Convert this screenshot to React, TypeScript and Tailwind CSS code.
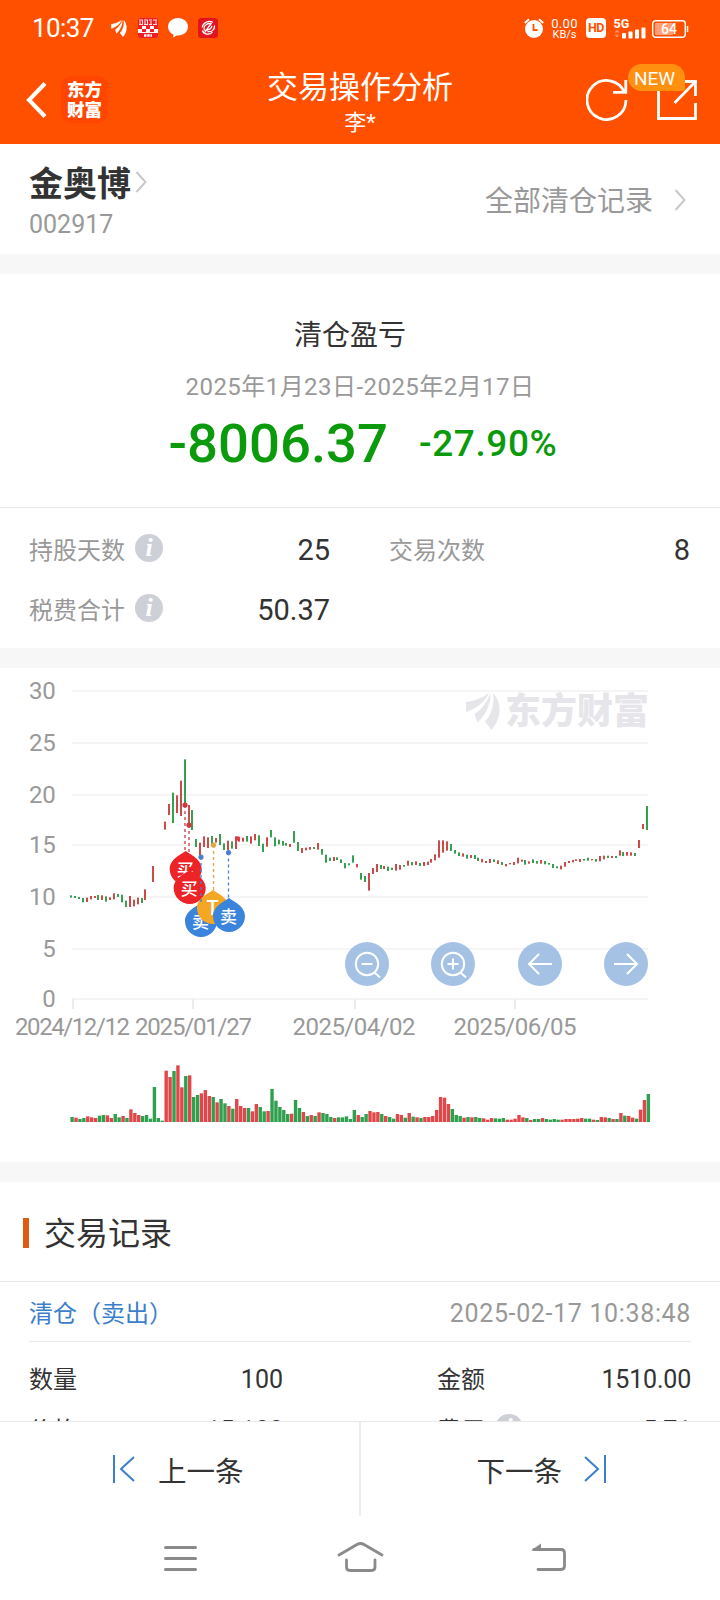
import React from 'react';

type Tone = 'r' | 'g';
type Candle = [index: number, tone: Tone, high: number, low: number];

const CANDLE_COLORS = { r: '#cb4a4a', g: '#36a052' };
const VOLUME_COLORS = { r: '#e0474a', g: '#2fa14e' };

// index, tone, top and bottom in thirds of a pixel below the chart origin
const CANDLES: Candle[] = [
  [0, 'g', 676, 683], [1, 'g', 678, 684], [2, 'g', 681, 687], [3, 'g', 684, 697], [4, 'r', 683, 696],
  [5, 'r', 678, 688], [6, 'r', 678, 684], [7, 'g', 675, 690], [8, 'r', 676, 690], [9, 'g', 679, 695],
  [10, 'r', 682, 690], [11, 'r', 670, 688], [12, 'g', 672, 681], [13, 'g', 674, 697], [14, 'g', 692, 711],
  [15, 'r', 678, 711], [16, 'r', 689, 709], [17, 'r', 683, 703], [18, 'g', 684, 699], [19, 'r', 658, 690],
  [21, 'r', 588, 636], [24, 'r', 455, 479], [25, 'r', 402, 435], [26, 'g', 368, 459], [27, 'r', 376, 429],
  [28, 'r', 332, 438], [29, 'g', 268, 405], [30, 'r', 405, 465], [31, 'g', 420, 480], [32, 'g', 507, 531],
  [33, 'r', 518, 555], [34, 'r', 499, 531], [35, 'r', 502, 534], [36, 'g', 498, 522], [37, 'r', 504, 518],
  [38, 'g', 492, 525], [39, 'g', 520, 540], [40, 'r', 512, 540], [41, 'g', 514, 536], [42, 'r', 499, 537],
  [43, 'r', 503, 515], [44, 'r', 503, 515], [45, 'g', 498, 515], [46, 'r', 499, 521], [47, 'r', 492, 511],
  [48, 'g', 496, 528], [49, 'g', 521, 546], [50, 'r', 502, 530], [51, 'g', 480, 502], [52, 'g', 502, 529],
  [53, 'g', 509, 523], [54, 'g', 513, 527], [55, 'g', 519, 527], [56, 'r', 522, 531], [57, 'g', 483, 518],
  [58, 'g', 516, 543], [59, 'r', 534, 549], [60, 'r', 533, 541], [61, 'r', 531, 539], [62, 'g', 531, 537],
  [63, 'r', 519, 539], [64, 'g', 537, 554], [65, 'g', 554, 578], [66, 'g', 563, 573], [67, 'r', 561, 573],
  [68, 'g', 562, 570], [69, 'g', 568, 579], [70, 'g', 579, 595], [71, 'g', 580, 586], [72, 'g', 556, 578],
  [73, 'r', 582, 592], [74, 'g', 609, 629], [75, 'g', 618, 636], [76, 'r', 609, 662], [77, 'r', 594, 612],
  [78, 'r', 582, 606], [79, 'g', 585, 597], [80, 'r', 588, 597], [81, 'g', 590, 603], [82, 'g', 593, 600],
  [83, 'r', 582, 602], [84, 'r', 585, 599], [85, 'g', 585, 590], [86, 'r', 572, 587], [87, 'g', 576, 586],
  [88, 'r', 574, 585], [89, 'g', 579, 588], [90, 'r', 576, 588], [91, 'r', 575, 585], [92, 'r', 567, 578],
  [93, 'r', 553, 571], [94, 'r', 511, 563], [95, 'r', 511, 548], [96, 'r', 514, 542], [97, 'g', 522, 543],
  [98, 'g', 540, 551], [99, 'g', 547, 558], [100, 'r', 550, 560], [101, 'g', 554, 566], [102, 'r', 555, 564],
  [103, 'g', 555, 567], [104, 'g', 563, 573], [105, 'r', 567, 577], [106, 'r', 573, 579], [107, 'r', 567, 579],
  [108, 'g', 568, 576], [109, 'r', 571, 582], [110, 'g', 576, 585], [111, 'r', 582, 589], [112, 'r', 579, 583],
  [113, 'r', 576, 585], [114, 'r', 563, 580], [115, 'r', 569, 575], [116, 'g', 570, 584], [117, 'r', 574, 581],
  [118, 'g', 568, 579], [119, 'g', 573, 581], [120, 'r', 570, 581], [121, 'g', 573, 583], [122, 'g', 579, 584],
  [123, 'g', 582, 594], [124, 'g', 589, 595], [125, 'r', 587, 598], [126, 'r', 576, 590], [127, 'r', 573, 579],
  [128, 'r', 570, 577], [129, 'r', 568, 573], [130, 'r', 567, 576], [131, 'g', 567, 572], [132, 'g', 563, 572],
  [133, 'r', 567, 571], [134, 'g', 567, 575], [135, 'r', 558, 574], [136, 'r', 557, 568], [137, 'g', 557, 564],
  [138, 'r', 558, 564], [139, 'g', 558, 564], [140, 'r', 541, 557], [141, 'g', 546, 558], [142, 'r', 546, 557],
  [143, 'r', 547, 557], [144, 'g', 549, 558], [145, 'r', 510, 534], [146, 'r', 462, 477], [147, 'g', 408, 480],
];

// daily volume, tone + height in thirds of a pixel
const VOLUMES =
  'g15 r13 g9 g12 r17 r14 r12 g19 g21 r20 r12 g24 g14 r18 g12 r38 r27 r21 g18 g21 g10 g105 g12 g4 r154 r135 ' +
  'g153 r170 r104 g138 r140 g75 g81 r86 r96 r78 g75 r59 g69 g56 r48 g40 r69 r48 r42 g42 r32 r54 g45 g32 r33 ' +
  'g99 g64 g45 g36 g24 r25 g66 g42 r30 g18 r21 g18 r29 g27 g24 g15 r12 g14 g14 g17 g9 g36 r21 g15 g24 r33 ' +
  'r29 r30 g24 r18 g15 g10 r24 r21 g13 r27 g16 r14 g12 r15 r15 r18 r36 r75 r73 r54 g39 g21 g18 r13 g15 r14 ' +
  'g15 g12 r11 r7 r12 g11 g10 g12 r7 r7 r10 r21 r14 g12 r6 g9 g9 r12 g9 g7 g9 g7 r7 r9 r9 r9 r10 r12 g10 ' +
  'g10 r7 g6 r15 r14 g12 r9 g9 r27 g19 r18 r13 g10 r37 r66 g84';

const Y_LABELS = [
  { value: 30, y: 691 },
  { value: 25, y: 743 },
  { value: 20, y: 795 },
  { value: 15, y: 845 },
  { value: 10, y: 897 },
  { value: 5, y: 949 },
  { value: 0, y: 999 },
];
const X_LABELS = [
  { x: 73, start: 15, width: 115, text: '2024/12/12' },
  { x: 193, start: 135, width: 117, text: '2025/01/27' },
  { x: 355, start: 292.5, width: 123, text: '2025/04/02' },
  { x: 515, start: 453.5, width: 123, text: '2025/06/05' },
];

const MARKS = [
  { x: 185, from: 805, end: 851, tip: 851, cx: 185.7, cy: 869, color: '#ec2427', dot: '#d0393b', label: '买' },
  { x: 189, from: 825, end: 852, tip: 870, cx: 189.7, cy: 888, color: '#ec2427', dot: '#d0393b', label: '买' },
  { x: 201, from: 857, end: 903, tip: 903, cx: 201, cy: 921, color: '#3b84dc', dot: '#4b80c8', label: '卖' },
  { x: 213.5, from: 845, end: 890, tip: 890, cx: 213, cy: 908, color: '#f5a623', dot: '#e0a640', label: 'T' },
  { x: 228.5, from: 852.5, end: 898, tip: 898, cx: 229, cy: 916, color: '#3b84dc', dot: '#4b80c8', label: '卖' },
];

const SwooshLogo: React.FC<{ className: string }> = ({ className }) => (
  <svg className={className} viewBox="0 0 34 37" fill="currentColor">
    <path d="M0 9C8 8 16 5 23 0 19 9 10 16 0 19Z" />
    <path d="M24.500 0C25 11 20 22 11.500 29.500L8.500 21C16 16 21 9 24.500 0Z" />
    <path d="M27 0C36 9 36 25 25.500 37L19 28.500C25 22 29 12 27 0Z" />
  </svg>
);

const InfoIcon: React.FC<{ className?: string }> = ({ className = '' }) => (
  <span
    className={`flex size-7 items-center justify-center rounded-full bg-[#cdd0d6] font-['Liberation_Serif',serif] text-[26px] leading-7 font-bold text-white italic ${className}`}
  >
    i
  </span>
);

const Chevron: React.FC<{ className?: string }> = ({ className = '' }) => (
  <svg className={className} width="12" height="22" viewBox="0 0 12 22" fill="none" stroke="#c8c8c8" strokeWidth="2">
    <path d="M1.500 1L10.500 11L1.500 21" />
  </svg>
);

const StatusBar = () => (
  <div className="flex h-14 items-center pr-[31px] pl-8">
    <span className="w-[79px] text-[26px] leading-none tracking-[-0.6px]">10:37</span>
    <SwooshLogo className="mr-[11px] h-[17px] w-4" />
    <svg className="mr-2.5" width="20" height="20" viewBox="0 0 20 20">
      <rect width="20" height="20" rx="3" fill="#f01d24" />
      <path d="M0 8h20v7H0z" fill="#fff" />
      <path d="M0 8h4v3H0zM8 8h4v3H8zM16 8h4v3h-4zM4 11h4v3H4zM12 11h4v3h-4z" fill="#f01d24" />
      <path d="M1 2h4M6 2h4M11 2h3M15 2h4M1 6.500h4M6 6.500h4M11 6.500h3M15 6.500h4M2 3v3M4.500 2v4M7 3v3M9.500 2v4M13 3v3M18 2v4" stroke="#fff" strokeWidth="0.9" fill="none" />
      <path d="M6 17.500h8" stroke="#fff" strokeWidth="2.500" strokeDasharray="2.500 0.700" />
    </svg>
    <svg className="mr-2.5" width="20" height="20" viewBox="0 0 20 20" fill="#fff">
      <path d="M10 0C15.600 0 20 3.800 20 8.700s-4.400 8.800-10 8.800c-.6 0-1.200 0-1.700-.1-.9 1.100-2 1.800-3.300 2.100.4-1 .5-2 .3-3C2 15 0 12.100 0 8.700 0 3.800 4.400 0 10 0Z" />
    </svg>
    <svg width="20" height="20" viewBox="0 0 20 20" fill="none" stroke="#fff" strokeWidth="1.300">
      <rect width="20" height="20" rx="3.500" fill="#e3131f" stroke="none" />
      <path d="M15 4.500C11 2 5 4.500 4.200 9.500M13 5.500C10 5 6 7 6 10.500c0 2 2 2.500 3.500 1.500M4.500 12.500c1 4 7 5 10 1.500M16.500 7.500c.5 4-3 7-7 6M13.500 5L7 14M14 8c-1 3-3 4-5 3.500" />
    </svg>

    <div className="ml-auto flex items-center">
      <svg width="20" height="20" viewBox="0 0 20 20" fill="none">
        <circle cx="10" cy="11" r="9" fill="#fff" />
        <path d="M0.800 5L5 1.200M15 1.200L19.200 5" stroke="#fff" strokeWidth="2" />
        <path d="M9.500 6v6h4" stroke="#ff5000" strokeWidth="1.800" />
      </svg>
      <div className="ml-[7px] flex w-[27px] flex-col items-center pt-0.5 whitespace-nowrap">
        <span className="text-[13px] leading-[12px] tracking-[0.3px]">0.00</span>
        <span className="text-[11px] leading-[10px]">KB/s</span>
      </div>
      <span className="ml-2 flex size-5 items-center justify-center rounded bg-white text-[12.500px] font-bold tracking-[-0.4px] text-[#ff5000]">
        HD
      </span>
      <svg className="ml-2 overflow-visible" width="32" height="21" viewBox="0 0 32 21" fill="#fff">
        <text x="-0.500" y="10" className="text-[12.500px] font-bold">5G</text>
        <path d="M0.500 14.500L3 11.500L5.500 14.500ZM0.500 16.500L3 19.500L5.500 16.500Z" opacity="0.350" />
        <rect x="8" y="15" width="4" height="5.500" rx="0.800" />
        <rect x="14.500" y="13.500" width="4" height="7" rx="0.800" />
        <rect x="21" y="11.500" width="4" height="9" rx="0.800" />
        <rect x="27.500" y="9.500" width="4" height="11" rx="0.800" />
      </svg>
      <svg className="mt-0.5 ml-1.5" width="37" height="18" viewBox="0 0 37 18">
        <rect x="0.700" y="0.700" width="32.600" height="16.600" rx="3" fill="none" stroke="#fff" strokeWidth="1.400" />
        <rect x="3" y="3" width="18" height="12" rx="1" fill="#fff" opacity="0.450" />
        <path d="M35.500 6v6" stroke="#fff" strokeWidth="1.500" />
        <text x="17" y="14" textAnchor="middle" fill="#fff" className="text-[14px] font-medium">64</text>
      </svg>
    </div>
  </div>
);

const TitleBar = () => (
  <div className="flex h-[88px] items-start px-5">
    <div className="flex flex-1 items-center pt-5 pl-1.5">
      <svg width="22" height="36" viewBox="0 0 22 36" fill="none" stroke="#fff" strokeWidth="4">
        <path d="M19 1.500L3 18L19 34.500" />
      </svg>
      <div className="ml-[13px] flex size-[47px] flex-col items-center justify-center rounded-[10px] bg-[#ff4600] text-[17.500px] leading-5 font-black">
        <span>东方</span>
        <span>财富</span>
      </div>
    </div>
    <div className="flex w-[186px] shrink-0 flex-col items-center pt-[13px] leading-none">
      <span className="text-[31px] leading-[38px]">交易操作分析</span>
      <span className="text-[22px] leading-[32px]">李*</span>
    </div>
    <div className="relative flex w-[247px] shrink-0 justify-end pt-[21px]">
      <svg width="114" height="44" viewBox="586 77 114 44" fill="none" stroke="#fff" strokeWidth="2.800">
        <path d="M626 100A19.500 19.500 0 1 1 624.500 92.500M625.800 80V92.300H613" />
        <path d="M678 81.500H658.500V118.500H695.500V103M695.500 96V81.500H683M674.500 103L695 82" />
      </svg>
      <span className="absolute top-2 right-[15px] flex h-[27px] w-[57px] items-center justify-center rounded-[14px] rounded-br-[3px] bg-[#ff9010] pt-[3px] pr-1 text-[19px] tracking-[-0.1px]">
        NEW
      </span>
    </div>
  </div>
);

const StockHeader = () => (
  <section className="flex h-[110px] items-center justify-between bg-white pt-1.5 pr-[34px] pl-[29px]">
    <div className="pt-0.5">
      <div className="flex items-center">
        <h1 className="text-[34px] leading-[44px] font-bold text-[#333]">金奥博</h1>
        <Chevron className="mb-1 ml-1" />
      </div>
      <p className="text-[25px] leading-[38px] text-[#999]">002917</p>
    </div>
    <div className="flex items-center gap-[21px] text-[28px] text-[#999]">
      全部清仓记录
      <Chevron className="mb-1" />
    </div>
  </section>
);

const Summary = () => (
  <section className="h-[234px] border-b border-[#e9e9e9] bg-white pt-[42px] text-center">
    <h2 className="pr-5 text-[28px] leading-10 text-[#333]">清仓盈亏</h2>
    <p className="mt-[11px] text-[24px] leading-10 tracking-[0.45px] text-[#999]">2025年1月23日-2025年2月17日</p>
    <div className="mt-1 flex h-[66px] items-center justify-center gap-[31px] pl-1.5 font-medium text-[#0b9a0b]">
      <span className="text-[54.500px]">-8006.37</span>
      <span className="text-[37px] tracking-[0.6px]">-27.90%</span>
    </div>
  </section>
);

const Stats = () => (
  <section className="grid h-[140px] grid-cols-[301px_301px] content-start justify-between bg-white pt-3 pr-[30px] pl-[29px] text-[24px] leading-[60px] text-[#999]">
    <div className="flex items-center justify-between">
      <span className="flex items-center gap-2.5">
        <span className="pt-0.5 leading-[58px]">持股天数</span>
        <InfoIcon className="mb-[5px]" />
      </span>
      <span className="text-[29px] text-[#333]">25</span>
    </div>
    <div className="flex items-center justify-between">
      <span className="pt-0.5 leading-[58px]">交易次数</span>
      <span className="text-[29px] text-[#333]">8</span>
    </div>
    <div className="flex items-center justify-between">
      <span className="flex items-center gap-2.5">
        <span className="pt-0.5 leading-[58px]">税费合计</span>
        <InfoIcon className="mb-[5px]" />
      </span>
      <span className="text-[29px] text-[#333]">50.37</span>
    </div>
  </section>
);

const ChartButton: React.FC<{ children: React.ReactNode }> = ({ children }) => (
  <button className="flex size-11 items-center justify-center rounded-full bg-[#8fb3dd]/80">
    <svg width="28" height="28" viewBox="0 0 28 28" fill="none" stroke="#fff" strokeWidth="2">
      {children}
    </svg>
  </button>
);

const PriceChart = () => (
  <section className="relative h-[494px] bg-white">
    <svg className="block" width="720" height="494" viewBox="0 668 720 494">
      {Y_LABELS.map(({ value, y }) => (
        <g key={value}>
          <rect x="72" y={y - 1} width="576" height="2" fill="#f5f5f5" />
          <text x="55.500" y={y + 7.5} textAnchor="end" fill="#999" className="text-[24px] tracking-[-0.3px]">{value}</text>
        </g>
      ))}
      {X_LABELS.map(({ x, start, width, text }) => (
        <g key={text}>
          <rect x={x - 1} y="999" width="2" height="10" fill="#ececec" />
          <text x={start} y="1035" textLength={width} fill="#999" className="text-[24px]">{text}</text>
        </g>
      ))}

      {CANDLES.map(([i, tone, high, low]) => (
        <rect
          key={i}
          x={Math.round(70 + i * 3.918)}
          y={670 + high / 3}
          width="2"
          height={(low - high) / 3}
          fill={CANDLE_COLORS[tone]}
        />
      ))}

      {VOLUMES.split(' ').map((bar, i) => {
        const height = Number(bar.slice(1)) / 3;
        return (
          <rect
            key={i}
            x={70.4 + i * 3.92}
            y={1122 - height}
            width="3.400"
            height={height}
            fill={VOLUME_COLORS[bar[0] as Tone]}
          />
        );
      })}

      {MARKS.map(({ tip, cx, cy, color, label }) => (
        <g key={cx}>
          <path
            d={`M${cx} ${tip}C${cx + 4} ${tip + 3} ${cx + 16} ${cy - 10} ${cx + 16} ${cy}A16 16 0 1 1 ${cx - 16} ${cy}C${cx - 16} ${cy - 10} ${cx - 4} ${tip + 3} ${cx} ${tip}Z`}
            fill={color}
          />
          <text
            x={cx - 0.5}
            y={cy + 6.5}
            textAnchor="middle"
            fill="#fff"
            className={label === 'T' ? 'text-[20px] font-medium' : 'text-[17px] font-medium'}
          >
            {label}
          </text>
        </g>
      ))}
      {MARKS.map(({ x, from, end, dot }) => (
        <g key={x}>
          <path d={`M${x} ${from}V${end}`} stroke={dot} strokeWidth="1.300" strokeDasharray="3 3" />
          <circle cx={x} cy={from} r="2.600" fill={dot} />
        </g>
      ))}
      <circle cx="238" cy="838.500" r="2.200" fill="#e0393b" />
    </svg>

    <div className="absolute top-[22px] right-[71px] flex items-center gap-[5px] text-[#e6e6ea]">
      <SwooshLogo className="h-[37px] w-[34px]" />
      <span className="pt-0.5 text-[36px] leading-[40px] font-black">东方财富</span>
    </div>

    <div className="absolute top-[274px] left-[345px] flex w-[303px] justify-between">
      <ChartButton>
        <circle cx="14" cy="14" r="11.200" />
        <path d="M8.500 14h11M21.500 22.500l5.500 5" />
      </ChartButton>
      <ChartButton>
        <circle cx="14" cy="14" r="11.200" />
        <path d="M8.500 14h11M14 8.500v11M21.500 22.500l5.500 5" />
      </ChartButton>
      <ChartButton>
        <path d="M26 14H3M13 4L3 14L13 24" />
      </ChartButton>
      <ChartButton>
        <path d="M2 14H25M15 4L25 14L15 24" />
      </ChartButton>
    </div>
  </section>
);

const RecordRow: React.FC<{ label: string; value: string; label2: string; value2: string; info?: boolean }> = ({
  label,
  value,
  label2,
  value2,
  info,
}) => (
  <div className="grid h-[51px] grid-cols-[254px_254px] justify-between text-[24px] text-[#333]">
    <div className="flex items-center justify-between">
      <span>{label}</span>
      <span className="text-[25px]">{value}</span>
    </div>
    <div className="flex items-center justify-between">
      <span className="flex items-center gap-2.5">
        {label2}
        {info && <InfoIcon className="mb-1.5" />}
      </span>
      <span className="text-[25px] tracking-[-0.2px]">{value2}</span>
    </div>
  </div>
);

const TradeRecords = () => (
  <section className="h-[239px] overflow-hidden bg-white">
    <div className="flex h-[100px] items-center border-b border-[#e9e9e9] pt-[3px] pl-[23px]">
      <span className="h-[30px] w-1.5 bg-[#df5a12]" />
      <h2 className="ml-[15px] pt-px text-[32px] leading-none text-[#333]">交易记录</h2>
    </div>
    <div className="mr-[29px] ml-[29px]">
      <div className="flex h-[60px] items-center justify-between border-b border-[#e9e9e9] pt-1">
        <span className="text-[24px] text-[#3b7ecb]">清仓（卖出）</span>
        <span className="text-[25px] tracking-[0.65px] text-[#999]">2025-02-17 10:38:48</span>
      </div>
      <div className="pt-3">
        <RecordRow label="数量" value="100" label2="金额" value2="1510.00" />
        <RecordRow label="价格" value="15.100" label2="费用" value2="5.71" info />
      </div>
    </div>
  </section>
);

const Pager = () => (
  <div className="flex h-[95px] border-t border-[#e9e9e9] bg-white text-[28.500px] text-[#333]">
    <button className="flex flex-1 items-center border-r-2 border-[#eee] pl-[112px]">
      <svg width="24" height="28" viewBox="0 0 24 28" fill="none" stroke="#3b7ecb" strokeWidth="2">
        <path d="M2 0V28M22 2L9 14L22 26" />
      </svg>
      <span className="ml-[22px] pt-2">上一条</span>
    </button>
    <button className="flex flex-1 items-center justify-end pr-[113px]">
      <span className="mr-[21px] pt-2">下一条</span>
      <svg width="24" height="28" viewBox="0 0 24 28" fill="none" stroke="#3b7ecb" strokeWidth="2">
        <path d="M22 0V28M2 2L15 14L2 26" />
      </svg>
    </button>
  </div>
);

const SystemNav = () => (
  <nav className="flex h-[84px] items-start bg-white pt-[26px] pl-[163px] text-[#8a8a8a]">
    <svg width="35" height="32" viewBox="0 0 35 32" stroke="currentColor" strokeWidth="3" strokeLinecap="round">
      <path d="M2.500 5.500H32.500M2.500 16.500H32.500M2.500 27.500H32.500" />
    </svg>
    <svg className="ml-[138px]" width="50" height="32" viewBox="0 0 50 32" fill="none" stroke="currentColor" strokeWidth="2.800" strokeLinecap="round">
      <path d="M3 13L21 2.500Q24.500 .5 28 2.500L46 13" />
      <path d="M10.500 18V25Q10.500 28.500 14 28.500H35.500Q39 28.500 39 25V18" />
    </svg>
    <svg className="ml-[144px]" width="38" height="32" viewBox="0 0 38 32" fill="none" stroke="currentColor" strokeWidth="2.800" strokeLinecap="round">
      <path d="M4 7.500H31Q34.500 7.500 34.500 11V24Q34.500 27.500 31 27.500H8" />
      <path d="M1 8.500L11 1.500V9Z" fill="currentColor" stroke="none" />
    </svg>
  </nav>
);

const App: React.FC = () => {
  return (
    <div className="flex h-[1600px] w-[720px] flex-col overflow-hidden bg-[#f7f7f7] font-['Roboto','Noto_Sans_CJK_SC',sans-serif]">
      <header className="h-36 shrink-0 bg-[#ff5000] text-white">
        <StatusBar />
        <TitleBar />
      </header>
      <main className="flex h-[1277px] shrink-0 flex-col gap-5 overflow-hidden">
        <StockHeader />
        <div>
          <Summary />
          <Stats />
        </div>
        <PriceChart />
        <TradeRecords />
      </main>
      <Pager />
      <SystemNav />
    </div>
  );
};

export default App;
